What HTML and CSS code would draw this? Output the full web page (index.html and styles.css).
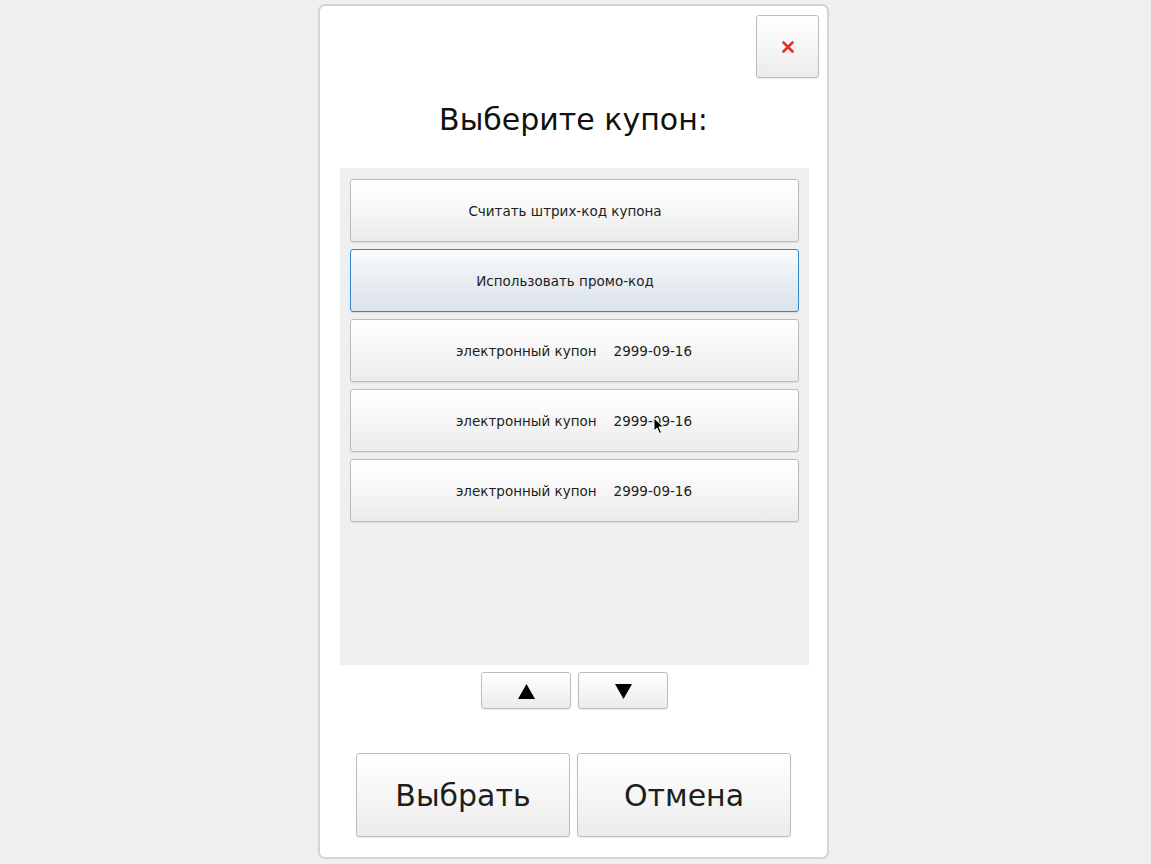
FILE: index.html
```html
<!DOCTYPE html>
<html lang="ru">
<head>
<meta charset="utf-8" />
<title>Выберите купон</title>
<link rel="stylesheet" href="styles.css">
</head>
<body>
    <div class="dialog">
        <div class="top-row">
            <button class="btn close-btn" type="button">
                <svg width="14" height="14" viewBox="0 0 14 14">
                    <line x1="2.5" y1="2.5" x2="11.5" y2="11.5" stroke="#e5302c" stroke-width="2.6" stroke-linecap="round" />
                    <line x1="11.5" y1="2.5" x2="2.5" y2="11.5" stroke="#e5302c" stroke-width="2.6" stroke-linecap="round" />
                </svg>
            </button>
        </div>

        <h1 class="title">Выберите купон:</h1>

        <!-- список купонов -->
        <div class="coupon-list">
            <button class="btn coupon shifted" type="button">Считать штрих-код купона</button>
            <button class="btn coupon shifted selected" type="button">Использовать промо-код</button>
            <button class="btn coupon" type="button">электронный купон<span class="date">2999-09-16</span></button>
            <button class="btn coupon" type="button">электронный купон<span class="date">2999-09-16</span></button>
            <button class="btn coupon" type="button">электронный купон<span class="date">2999-09-16</span></button>
        </div>

        <div class="scroll-row">
            <button class="btn arrow" type="button">
                <svg width="19" height="17" viewBox="0 0 19 17"><polygon points="9.5,1 18,16 1,16" fill="#000" /></svg>
            </button>
            <button class="btn arrow" type="button">
                <svg width="19" height="17" viewBox="0 0 19 17"><polygon points="1,1 18,1 9.5,16" fill="#000" /></svg>
            </button>
        </div>

        <div class="action-row">
            <button class="btn action" type="button">Выбрать</button>
            <button class="btn action" type="button">Отмена</button>
        </div>

        <svg class="cursor" width="12" height="18" viewBox="0 0 12 18">
            <polygon points="1,1 1,14 4,11 6.5,16.5 8.5,15.5 6,10 10.5,10" fill="#000" stroke="#fff" stroke-width="1" />
        </svg>
    </div>
</body>
</html>
```

FILE: styles.css
```css
body {
    margin: 0;
    background-color: #efefef;
    font-family: "DejaVu Sans", "Liberation Sans", sans-serif;
    color: #1e1e1e;
}

.dialog {
    position: relative;
    box-sizing: border-box;
    width: 511px;
    height: 855px;
    margin: 4px 0 0 318px;
    background-color: #fff;
    border: 2px solid #d4d4d4;
    border-radius: 7px;
    display: flex;
    flex-direction: column;
    align-items: center;
}

.btn {
    box-sizing: border-box;
    margin: 0;
    padding: 0;
    border: 1px solid #bcbcbc;
    border-radius: 3px;
    background: linear-gradient(to bottom, #ffffff 0%, #f6f6f6 50%, #ebebeb 100%);
    font-family: "DejaVu Sans", "Liberation Sans", sans-serif;
    color: #1e1e1e;
    display: flex;
    align-items: center;
    justify-content: center;
    box-shadow: 0 1px 1px rgba(0, 0, 0, 0.08);
}

.top-row {
    align-self: stretch;
    display: flex;
    justify-content: flex-end;
    padding: 9px 8px 0 0;
}

.close-btn {
    width: 63px;
    height: 63px;
}

.title {
    margin: 24px 0 30px 0;
    font-size: 30px;
    line-height: 36px;
    font-weight: normal;
    color: #111;
}

.coupon-list {
    box-sizing: border-box;
    width: 469px;
    height: 497px;
    margin-left: 1px;
    padding: 11px 10px;
    background-color: #efefef;
    display: flex;
    flex-direction: column;
    gap: 7px;
}

.coupon {
    width: 449px;
    height: 63px;
    flex-shrink: 0;
    font-size: 13.5px;
}

/* у первых двух пунктов текст сдвинут влево */
.coupon.shifted {
    padding-right: 18px;
}

.coupon.selected {
    border-color: #2f8ad6;
    background: linear-gradient(to bottom, #f9fbfc 0%, #e9eef2 50%, #dbe3e9 100%);
}

.date {
    margin-left: 17px;
}

.scroll-row {
    display: flex;
    gap: 7px;
    margin: 7px 0 0 2px;
}

.arrow {
    width: 90px;
    height: 37px;
    padding-top: 2px;
}

.action-row {
    display: flex;
    gap: 7px;
    margin-top: 44px;
}

.action {
    width: 214px;
    height: 84px;
    font-size: 30px;
}

.cursor {
    position: absolute;
    left: 333px;
    top: 411px;
}
```
